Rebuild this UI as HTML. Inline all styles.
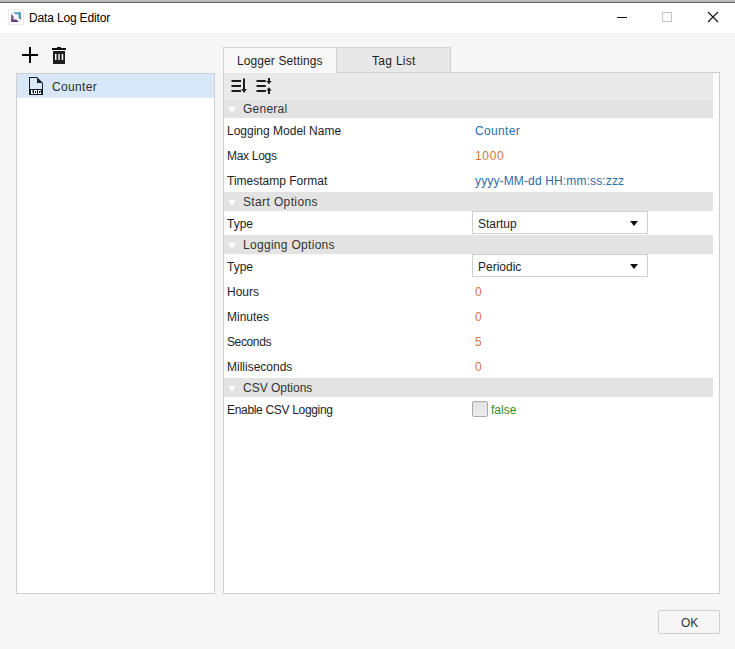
<!DOCTYPE html>
<html><head><meta charset="utf-8">
<style>
*{margin:0;padding:0;box-sizing:border-box}
html,body{width:735px;height:649px;overflow:hidden;background:#f6f6f6;font-family:"Liberation Sans",sans-serif;font-size:12px;color:#1e1e1e}
.a{position:absolute}
.t{position:absolute;white-space:nowrap;line-height:14px}
#topstrip{left:0;top:0;width:735px;height:3px;background:linear-gradient(#b9bab9 0,#b9bab9 2px,#5f615f 2px,#5f615f 3px)}
#titlebar{left:0;top:3px;width:735px;height:30px;background:#fff}
.panel{position:absolute;background:#fff;border:1px solid #cfcfcf}
.cat{position:absolute;left:224px;width:489px;background:#e3e3e3}
.tri{position:absolute;left:4px;width:0;height:0;border-left:4px solid transparent;border-right:4px solid transparent;border-top:6px solid #fff}
.lbl{position:absolute;left:227px;white-space:nowrap;line-height:14px;color:#1e1e1e}
.val{position:absolute;left:475px;white-space:nowrap;line-height:14px}
.blue{color:#2a6ea9}
.orange{color:#d4763c}
.dd{position:absolute;left:472px;width:176px;height:23px;border:1px solid #cfcfcf;background:#fff}
.dd .t{left:5px;top:5px;color:#1e1e1e}
.dd .arr{position:absolute;left:157px;width:0;height:0;border-left:4px solid transparent;border-right:4px solid transparent;border-top:5px solid #111}
</style></head><body>
<div id="topstrip" class="a"></div>
<div id="titlebar" class="a"></div>
<!-- app icon -->
<svg class="a" style="left:8px;top:9px" width="16" height="16" viewBox="0 0 16 16">
  <rect x="0.5" y="0.5" width="15" height="15" fill="#fff" stroke="#ebebeb"/>
  <defs>
    <linearGradient id="gp" x1="0" y1="0" x2="0.4" y2="1"><stop offset="0" stop-color="#9a7cb0"/><stop offset="1" stop-color="#5b3b78"/></linearGradient>
    <linearGradient id="gt" x1="0" y1="0" x2="1" y2="1"><stop offset="0" stop-color="#84c6e0"/><stop offset="1" stop-color="#35869f"/></linearGradient>
  </defs>
  <polygon points="3,4.6 3,13 11,13 8.4,10.4 5.6,10.4 5.6,7.2" fill="url(#gp)"/>
  <polygon points="4.8,3 13,3 13,11 10.4,8.4 10.4,5.6 7.4,5.6" fill="url(#gt)"/>
</svg>
<div class="t" style="left:29px;top:11px;color:#000;letter-spacing:-0.16px">Data Log Editor</div>
<!-- window controls -->
<div class="a" style="left:617px;top:17px;width:10px;height:1px;background:#111"></div>
<div class="a" style="left:662px;top:12px;width:10px;height:10px;border:1px solid #c4c4c4"></div>
<svg class="a" style="left:707px;top:11px" width="12" height="12" viewBox="0 0 12 12"><path d="M1,1 L11,11 M11,1 L1,11" stroke="#111" stroke-width="1.1"/></svg>

<!-- add / delete -->
<div class="a" style="left:22px;top:54px;width:16px;height:2px;background:#000"></div>
<div class="a" style="left:29px;top:47px;width:2px;height:16px;background:#000"></div>
<svg class="a" style="left:52px;top:46px" width="14" height="18" viewBox="0 0 14 18">
  <rect x="5" y="1" width="4" height="2" fill="#111"/>
  <rect x="0" y="2" width="14" height="2" fill="#111"/>
  <rect x="1" y="5" width="12" height="13" fill="#1e1e1e"/>
  <rect x="3" y="8" width="1.5" height="6" fill="#fff"/>
  <rect x="6" y="8" width="2" height="6" fill="#bbb"/>
  <rect x="9.7" y="8" width="1.5" height="6" fill="#fff"/>
</svg>

<!-- left panel -->
<div class="panel" style="left:16px;top:73px;width:199px;height:521px"></div>
<div class="a" style="left:17px;top:74px;width:197px;height:24px;background:#d9e8f8"></div>
<svg class="a" style="left:29px;top:77px" width="14" height="18" viewBox="0 0 14 18">
  <path d="M0,0 H8 L14,6 V18 H0 Z" fill="#16202a"/>
  <path d="M1,1 H8 V6 H13 V12 H1 Z" fill="#dde9f6"/>
  <g fill="#fff">
  <rect x="2" y="13" width="1.5" height="4"/><rect x="2" y="16" width="2.5" height="1"/>
  <rect x="5" y="13" width="3" height="4"/>
  <rect x="9" y="13" width="3" height="4"/>
  </g>
  <g fill="#16202a">
  <rect x="6" y="14" width="1" height="2"/>
  <rect x="10" y="14" width="1" height="2"/><rect x="11" y="14" width="1" height="1"/>
  </g>
</svg>
<div class="t" style="left:52px;top:80px;color:#27303a;letter-spacing:0.33px">Counter</div>

<!-- tabs -->
<div class="a" style="left:336px;top:47px;width:115px;height:26px;background:#e8e8e8;border:1px solid #d3d3d3"></div>
<div class="t" style="left:372px;top:54px;letter-spacing:0.3px">Tag List</div>

<!-- right panel -->
<div class="panel" style="left:223px;top:72px;width:497px;height:522px"></div>
<div class="a" style="left:223px;top:47px;width:114px;height:26px;background:#f8f8f8;border:1px solid #d3d3d3;border-bottom:none"></div>
<div class="t" style="left:237px;top:54px;letter-spacing:0.1px">Logger Settings</div>
<div class="a" style="left:224px;top:73px;width:489px;height:27px;background:#e9e9e9"></div>
<!-- sort icons -->
<svg class="a" style="left:226px;top:74px" width="50" height="24" viewBox="226 74 50 24">
  <g fill="#1c1c1c">
  <rect x="231.5" y="80" width="9.5" height="2"/>
  <rect x="231.5" y="85" width="9.5" height="2"/>
  <rect x="231.5" y="90" width="9.5" height="2"/>
  <rect x="243" y="78.5" width="2" height="11"/>
  <polygon points="241.2,89 246.8,89 244,93"/>
  <rect x="256.5" y="80" width="9.3" height="2"/>
  <rect x="256.5" y="85" width="9.3" height="2"/>
  <rect x="256.5" y="90" width="9.3" height="2"/>
  <rect x="268" y="78" width="2" height="4"/>
  <polygon points="266.3,81 271.7,81 269,84.2"/>
  <rect x="268" y="90" width="2" height="4"/>
  <polygon points="266.3,90.5 271.7,90.5 269,87.3"/>
  </g>
</svg>

<!-- General -->
<div class="cat" style="top:100px;height:18px"><div class="tri" style="top:7px"></div></div>
<div class="t" style="left:243px;top:102px;color:#333;letter-spacing:0.25px">General</div>
<div class="lbl" style="top:124px">Logging Model Name</div>
<div class="val blue" style="top:124px;letter-spacing:0.33px">Counter</div>
<div class="lbl" style="top:149px;letter-spacing:-0.3px">Max Logs</div>
<div class="val orange" style="top:149px;letter-spacing:0.7px">1000</div>
<div class="lbl" style="top:174px">Timestamp Format</div>
<div class="val blue" style="top:174px;letter-spacing:0.14px">yyyy-MM-dd HH:mm:ss:zzz</div>

<!-- Start Options -->
<div class="cat" style="top:192px;height:19px"><div class="tri" style="top:8px"></div></div>
<div class="t" style="left:243px;top:195px;color:#333;letter-spacing:0.37px">Start Options</div>
<div class="lbl" style="top:217px">Type</div>
<div class="dd" style="top:211px"><div class="t">Startup</div><div class="arr" style="top:9px"></div></div>

<!-- Logging Options -->
<div class="cat" style="top:235px;height:19px"><div class="tri" style="top:8px"></div></div>
<div class="t" style="left:243px;top:238px;color:#333;letter-spacing:0.3px">Logging Options</div>
<div class="lbl" style="top:260px">Type</div>
<div class="dd" style="top:254px"><div class="t">Periodic</div><div class="arr" style="top:9px"></div></div>
<div class="lbl" style="top:285px">Hours</div>
<div class="val orange" style="top:285px">0</div>
<div class="lbl" style="top:310px">Minutes</div>
<div class="val orange" style="top:310px">0</div>
<div class="lbl" style="top:335px;letter-spacing:-0.38px">Seconds</div>
<div class="val orange" style="top:335px">5</div>
<div class="lbl" style="top:360px">Milliseconds</div>
<div class="val orange" style="top:360px">0</div>

<!-- CSV Options -->
<div class="cat" style="top:378px;height:19px"><div class="tri" style="top:8px"></div></div>
<div class="t" style="left:243px;top:381px;color:#333">CSV Options</div>
<div class="lbl" style="top:403px;letter-spacing:-0.32px">Enable CSV Logging</div>
<div class="a" style="left:472px;top:401px;width:16px;height:16px;border:1px solid #a8a8a8;border-radius:2px;background:linear-gradient(#e2e2e2,#ececec)"></div>
<div class="t" style="left:491px;top:403px;color:#3a8a2a">false</div>

<!-- OK button -->
<div class="a" style="left:658px;top:610px;width:62px;height:24px;border:1px solid #cfcfcf;border-radius:2px;background:#f6f6f6"></div>
<div class="t" style="left:681px;top:616px;color:#333">OK</div>
</body></html>
